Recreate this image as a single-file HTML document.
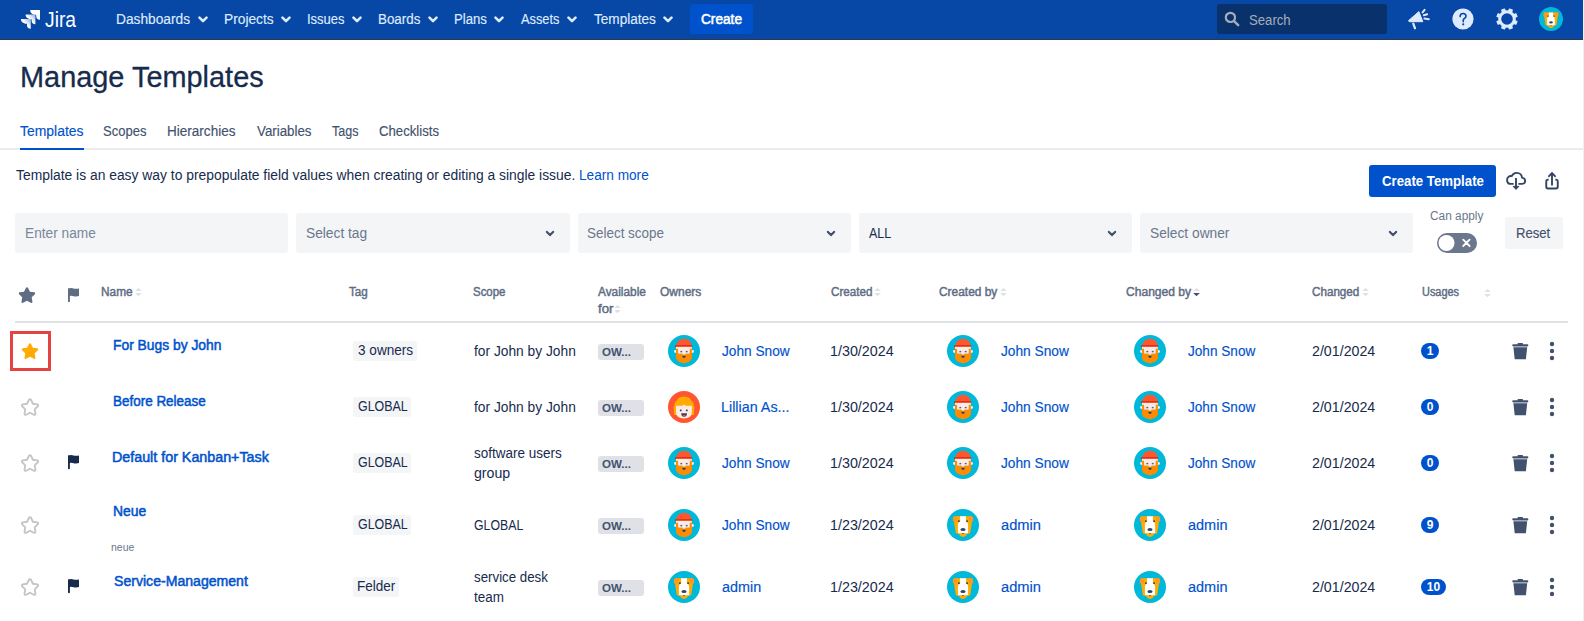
<!DOCTYPE html>
<html><head><meta charset="utf-8"><style>
html,body{margin:0;padding:0;background:#fff;width:1584px;height:621px;overflow:hidden;font-family:'Liberation Sans', sans-serif}
</style></head><body>
<div style="position:relative;width:1584px;height:621px;overflow:hidden">
<div style="position:absolute;left:0;top:0;width:1583px;height:39px;background:#0747A6"></div><div style="position:absolute;left:0;top:39px;width:1583px;height:1px;background:#2f3846"></div><div style="position:absolute;left:1583px;top:0;width:1px;height:621px;background:#f0f0f0"></div><svg style="position:absolute;left:20px;top:9px" width="21" height="21" viewBox="0 0 21 21">
<defs><linearGradient id="jg" x1="1" y1="0" x2="0" y2="1"><stop offset="0" stop-color="#fff" stop-opacity="0.55"/><stop offset="0.5" stop-color="#fff"/></linearGradient></defs>
<path d="M10.2 1 H20 V10.8 C17.5 10.8 16.2 9.3 16.2 7.2 V5.8 C13 5.8 10.2 4.3 10.2 1 Z" fill="#fff"/>
<path d="M5.6 5.6 H15.4 V15.3 C12.9 15.3 11.6 13.8 11.6 11.7 V10.3 C8.4 10.3 5.6 8.9 5.6 5.6 Z" fill="url(#jg)"/>
<path d="M1 10 H10.8 V19.8 C8.3 19.8 7 18.3 7 16.2 V14.7 C3.8 14.7 1 13.3 1 10 Z" fill="url(#jg)"/>
</svg><svg style="position:absolute;left:198.1px;top:15.6px" width="10" height="7" viewBox="0 0 10 7"><path d="M1.5 1.6 L5 5.1 L8.5 1.6" fill="none" stroke="#DEEBFF" stroke-width="2.6" stroke-linecap="round" stroke-linejoin="round"/></svg><svg style="position:absolute;left:280.9px;top:15.6px" width="10" height="7" viewBox="0 0 10 7"><path d="M1.5 1.6 L5 5.1 L8.5 1.6" fill="none" stroke="#DEEBFF" stroke-width="2.6" stroke-linecap="round" stroke-linejoin="round"/></svg><svg style="position:absolute;left:351.79999999999995px;top:15.6px" width="10" height="7" viewBox="0 0 10 7"><path d="M1.5 1.6 L5 5.1 L8.5 1.6" fill="none" stroke="#DEEBFF" stroke-width="2.6" stroke-linecap="round" stroke-linejoin="round"/></svg><svg style="position:absolute;left:428.2px;top:15.6px" width="10" height="7" viewBox="0 0 10 7"><path d="M1.5 1.6 L5 5.1 L8.5 1.6" fill="none" stroke="#DEEBFF" stroke-width="2.6" stroke-linecap="round" stroke-linejoin="round"/></svg><svg style="position:absolute;left:494.4px;top:15.6px" width="10" height="7" viewBox="0 0 10 7"><path d="M1.5 1.6 L5 5.1 L8.5 1.6" fill="none" stroke="#DEEBFF" stroke-width="2.6" stroke-linecap="round" stroke-linejoin="round"/></svg><svg style="position:absolute;left:566.8px;top:15.6px" width="10" height="7" viewBox="0 0 10 7"><path d="M1.5 1.6 L5 5.1 L8.5 1.6" fill="none" stroke="#DEEBFF" stroke-width="2.6" stroke-linecap="round" stroke-linejoin="round"/></svg><svg style="position:absolute;left:663.1px;top:15.6px" width="10" height="7" viewBox="0 0 10 7"><path d="M1.5 1.6 L5 5.1 L8.5 1.6" fill="none" stroke="#DEEBFF" stroke-width="2.6" stroke-linecap="round" stroke-linejoin="round"/></svg><div style="position:absolute;left:690px;top:4px;width:63px;height:30px;background:#0052CC;border-radius:3px"></div><div style="position:absolute;left:1217px;top:4px;width:170px;height:30px;background:#09326C;border-radius:3px"></div><svg style="position:absolute;left:1224px;top:11px" width="16" height="16" viewBox="0 0 16 16"><circle cx="6.4" cy="6.4" r="4.6" fill="none" stroke="#A5ADBA" stroke-width="2.2"/><path d="M9.8 9.8 L14.2 14.2" stroke="#A5ADBA" stroke-width="2.4" stroke-linecap="round"/></svg><svg style="position:absolute;left:1404px;top:6px" width="30" height="26" viewBox="0 0 30 26">
<path d="M4.6 14.6 L14.9 5.6 L18.8 15.7 L5.2 15.7 Z" fill="#DEEBFF" stroke="#DEEBFF" stroke-width="1" stroke-linejoin="round"/>
<path d="M9.3 17.6 L11 22.3" stroke="#DEEBFF" stroke-width="2.2" stroke-linecap="round"/>
<path d="M18.6 6.4 L20.6 3.8 M19.8 9.2 L23.2 8.2 M20.4 12.6 L24.8 13.2" stroke="#DEEBFF" stroke-width="2" stroke-linecap="round"/>
</svg><svg style="position:absolute;left:1452px;top:8px" width="22" height="22" viewBox="0 0 22 22">
<circle cx="11" cy="11" r="10.6" fill="#DEEBFF"/>
<path d="M8.1 8.6 C8.1 6.6 9.4 5.5 11.1 5.5 C12.8 5.5 14 6.6 14 8.2 C14 9.9 12.2 10.4 11.4 11.6 L11.2 13.6" fill="none" stroke="#0747A6" stroke-width="1.6" stroke-linecap="round"/>
<circle cx="11.2" cy="16.3" r="1.1" fill="#0747A6"/>
</svg><svg style="position:absolute;left:1496px;top:8px" width="22" height="22" viewBox="-11 -11 22 22">
<rect x="-2.1" y="-10.8" width="4.2" height="4.5" rx="0.6" transform="rotate(22.5)" fill="#DEEBFF"/><rect x="-2.1" y="-10.8" width="4.2" height="4.5" rx="0.6" transform="rotate(67.5)" fill="#DEEBFF"/><rect x="-2.1" y="-10.8" width="4.2" height="4.5" rx="0.6" transform="rotate(112.5)" fill="#DEEBFF"/><rect x="-2.1" y="-10.8" width="4.2" height="4.5" rx="0.6" transform="rotate(157.5)" fill="#DEEBFF"/><rect x="-2.1" y="-10.8" width="4.2" height="4.5" rx="0.6" transform="rotate(202.5)" fill="#DEEBFF"/><rect x="-2.1" y="-10.8" width="4.2" height="4.5" rx="0.6" transform="rotate(247.5)" fill="#DEEBFF"/><rect x="-2.1" y="-10.8" width="4.2" height="4.5" rx="0.6" transform="rotate(292.5)" fill="#DEEBFF"/><rect x="-2.1" y="-10.8" width="4.2" height="4.5" rx="0.6" transform="rotate(337.5)" fill="#DEEBFF"/><circle r="7.3" fill="none" stroke="#DEEBFF" stroke-width="3"/></svg><svg style="position:absolute;left:1539.0px;top:7.0px" width="24" height="24" viewBox="0 0 32 32">
<circle cx="16" cy="16" r="16" fill="#00B8D9"/>
<path d="M7.4 7.6 Q7.4 7.2 8 7.2 H24 Q24.6 7.2 24.6 7.6 L24.8 14 L23.2 24.2 Q21.2 24.8 19.8 24.8 L19.4 26.6 Q17.8 28 16 28 Q14.2 28 12.6 26.6 L12.2 24.8 Q10.8 24.8 8.8 24.2 L7.2 14 Z" fill="#FFAB00"/>
<path d="M6 8.6 Q6.2 7 8.2 7 L10.4 7.2 L10.2 12.6 L7.2 12.8 Q5.8 12.6 5.8 11.2 Z" fill="#FF991F"/>
<path d="M26 8.6 Q25.8 7 23.8 7 L21.6 7.2 L21.8 12.6 L24.8 12.8 Q26.2 12.6 26.2 11.2 Z" fill="#FF991F"/>
<path d="M13 7.2 H19 L18.8 12.2 Q20.9 13.2 21.1 15.4 L21.1 24.3 L10.9 24.3 L10.9 15.4 Q11.1 13.2 13.2 12.2 Z" fill="#ffffff"/>
<rect x="11" y="11.3" width="1.7" height="1.8" rx="0.4" fill="#344563"/><rect x="19.3" y="11.3" width="1.7" height="1.8" rx="0.4" fill="#344563"/>
<ellipse cx="16" cy="20.5" rx="2.6" ry="1.5" fill="#344563"/>
<path d="M14.8 24.3 H17.2 L16 25.3 Z" fill="#344563"/>
</svg><div style="position:absolute;left:0;top:148px;width:1583px;height:2px;background:#EBECF0"></div><div style="position:absolute;left:20px;top:148px;width:64px;height:2px;background:#0052CC"></div><div style="position:absolute;left:1369px;top:165px;width:127px;height:32px;background:#0052CC;border-radius:3px"></div><svg style="position:absolute;left:1502px;top:168px" width="28" height="26" viewBox="0 0 28 26">
<path d="M11.6 15.9 H8.9 C6.6 15.9 5.1 14.1 5.1 11.9 C5.1 9.7 6.8 8.0 9 8.0 C9.2 8 9.5 8 9.7 8.1 C10.5 6.1 12.4 4.9 14.8 4.9 C17.6 4.9 19.8 6.9 20 9.6 C21.9 9.9 23.2 11.3 23.2 13 C23.2 14.6 22 15.9 20.3 15.9 H16.4" fill="none" stroke="#344563" stroke-width="1.9" stroke-linejoin="round"/>
<path d="M14 10 V20.6" stroke="#344563" stroke-width="1.9"/>
<path d="M11.2 18.4 L14 21.4 L16.8 18.4 Z" fill="#344563" stroke="#344563" stroke-width="1" stroke-linejoin="round"/>
</svg><svg style="position:absolute;left:1538px;top:168px" width="28" height="26" viewBox="0 0 28 26">
<path d="M10.7 11.6 H10 C9 11.6 8.25 12.4 8.25 13.4 V18.8 C8.25 19.8 9 20.55 10 20.55 H18 C19 20.55 19.75 19.8 19.75 18.8 V13.4 C19.75 12.4 19 11.6 18 11.6 H17.3" fill="none" stroke="#344563" stroke-width="1.9"/>
<path d="M14 5.6 V17.4" stroke="#344563" stroke-width="1.9"/>
<path d="M11 8.2 L14 5.1 L17 8.2" fill="none" stroke="#344563" stroke-width="1.9" stroke-linecap="round"/>
</svg><div style="position:absolute;left:15px;top:213px;width:273px;height:40px;background:#F4F5F7;border-radius:3px"></div><div style="position:absolute;left:296px;top:213px;width:274px;height:40px;background:#F4F5F7;border-radius:3px"></div><div style="position:absolute;left:578px;top:213px;width:273px;height:40px;background:#F4F5F7;border-radius:3px"></div><div style="position:absolute;left:859px;top:213px;width:273px;height:40px;background:#F4F5F7;border-radius:3px"></div><div style="position:absolute;left:1140px;top:213px;width:273px;height:40px;background:#F4F5F7;border-radius:3px"></div><svg style="position:absolute;left:545.3px;top:229.6px" width="10" height="8" viewBox="0 0 10 8"><path d="M1.9 1.9 L5 5.1 L8.1 1.9" fill="none" stroke="#42526E" stroke-width="2.2" stroke-linecap="round" stroke-linejoin="round"/></svg><svg style="position:absolute;left:826.3px;top:229.6px" width="10" height="8" viewBox="0 0 10 8"><path d="M1.9 1.9 L5 5.1 L8.1 1.9" fill="none" stroke="#42526E" stroke-width="2.2" stroke-linecap="round" stroke-linejoin="round"/></svg><svg style="position:absolute;left:1107.3px;top:229.6px" width="10" height="8" viewBox="0 0 10 8"><path d="M1.9 1.9 L5 5.1 L8.1 1.9" fill="none" stroke="#42526E" stroke-width="2.2" stroke-linecap="round" stroke-linejoin="round"/></svg><svg style="position:absolute;left:1388.3px;top:229.6px" width="10" height="8" viewBox="0 0 10 8"><path d="M1.9 1.9 L5 5.1 L8.1 1.9" fill="none" stroke="#42526E" stroke-width="2.2" stroke-linecap="round" stroke-linejoin="round"/></svg><svg style="position:absolute;left:1437px;top:233px" width="40" height="20" viewBox="0 0 40 20">
<rect x="0" y="0" width="40" height="20" rx="10" fill="#6B778C"/>
<circle cx="9.5" cy="10" r="8" fill="#fff"/>
<path d="M26.2 6.6 L32.6 13 M32.6 6.6 L26.2 13" stroke="#fff" stroke-width="1.8" stroke-linecap="round"/>
</svg><div style="position:absolute;left:1505px;top:217px;width:58px;height:32px;background:#F4F5F7;border-radius:3px"></div><svg style="position:absolute;left:19px;top:287px;overflow:visible" width="16" height="16" viewBox="0 0 16 16"><g transform="scale(1.0666666666666667) translate(-4.6 -4.4)"><path d="M12.072 17.284l-3.67 1.927a1.01 1.01 0 0 1-1.465-1.068l.7-4.09-2.969-2.894a1.01 1.01 0 0 1 .56-1.725l4.104-.596 1.835-3.718a1.01 1.01 0 0 1 1.81 0l1.836 3.718 4.104.596a1.01 1.01 0 0 1 .56 1.725l-2.97 2.895.701 4.089a1.01 1.01 0 0 1-1.465 1.068l-3.67-1.927z" fill="#5E6C84"/></g></svg><svg style="position:absolute;left:68px;top:287.5px" width="12" height="15" viewBox="0 0 12 15"><rect x="0" y="0.2" width="1.9" height="14" rx="0.9" fill="#5E6C84"/><path d="M0.6 0.6 Q3 -0.3 5.6 0.5 Q8.4 1.2 11 0.4 L11 8.1 Q8.4 9 5.6 8.2 Q3 7.4 0.6 8.2 Z" fill="#5E6C84"/></svg><svg style="position:absolute;left:135px;top:288px" width="7" height="9" viewBox="0 0 7 9"><path d="M0.2 3 L3.5 0 L6.8 3 Z" fill="#DFE1E6"/><path d="M0.2 5 L3.5 8.2 L6.8 5 Z" fill="#DFE1E6"/></svg><svg style="position:absolute;left:614px;top:305px" width="7" height="9" viewBox="0 0 7 9"><path d="M0.2 3 L3.5 0 L6.8 3 Z" fill="#DFE1E6"/><path d="M0.2 5 L3.5 8.2 L6.8 5 Z" fill="#DFE1E6"/></svg><svg style="position:absolute;left:874px;top:288px" width="7" height="9" viewBox="0 0 7 9"><path d="M0.2 3 L3.5 0 L6.8 3 Z" fill="#DFE1E6"/><path d="M0.2 5 L3.5 8.2 L6.8 5 Z" fill="#DFE1E6"/></svg><svg style="position:absolute;left:999.5px;top:288px" width="7" height="9" viewBox="0 0 7 9"><path d="M0.2 3 L3.5 0 L6.8 3 Z" fill="#DFE1E6"/><path d="M0.2 5 L3.5 8.2 L6.8 5 Z" fill="#DFE1E6"/></svg><svg style="position:absolute;left:1192.5px;top:288px" width="7" height="9" viewBox="0 0 7 9"><path d="M0.2 3 L3.5 0 L6.8 3 Z" fill="#DFE1E6"/><path d="M0.2 5 L3.5 8.2 L6.8 5 Z" fill="#42526E"/></svg><svg style="position:absolute;left:1361.5px;top:288px" width="7" height="9" viewBox="0 0 7 9"><path d="M0.2 3 L3.5 0 L6.8 3 Z" fill="#DFE1E6"/><path d="M0.2 5 L3.5 8.2 L6.8 5 Z" fill="#DFE1E6"/></svg><svg style="position:absolute;left:1483.5px;top:289px" width="7" height="9" viewBox="0 0 7 9"><path d="M0.2 3 L3.5 0 L6.8 3 Z" fill="#DFE1E6"/><path d="M0.2 5 L3.5 8.2 L6.8 5 Z" fill="#DFE1E6"/></svg><div style="position:absolute;left:15px;top:321px;width:1553px;height:2px;background:#DFE1E6"></div><div style="position:absolute;left:10px;top:331px;width:35px;height:34px;border:3px solid #E5433F"></div><svg style="position:absolute;left:22px;top:343px;overflow:visible" width="16" height="16" viewBox="0 0 16 16"><g transform="scale(1.0666666666666667) translate(-4.6 -4.4)"><path d="M12.072 17.284l-3.67 1.927a1.01 1.01 0 0 1-1.465-1.068l.7-4.09-2.969-2.894a1.01 1.01 0 0 1 .56-1.725l4.104-.596 1.835-3.718a1.01 1.01 0 0 1 1.81 0l1.836 3.718 4.104.596a1.01 1.01 0 0 1 .56 1.725l-2.97 2.895.701 4.089a1.01 1.01 0 0 1-1.465 1.068l-3.67-1.927z" fill="#FFAB00"/></g></svg><div style="position:absolute;left:353px;top:341px;width:64px;height:20px;background:#F4F5F7;border-radius:3px"></div><div style="position:absolute;left:598px;top:344px;width:46px;height:16px;background:#DFE1E6;border-radius:3px"></div><svg style="position:absolute;left:668.0px;top:335.0px" width="32" height="32" viewBox="0 0 32 32">
<circle cx="16" cy="16" r="16" fill="#00B8D9"/>
<path d="M8.8 10.6 Q8.8 3.8 16 3.8 Q23.2 3.8 23.2 10.6 Z" fill="#FF5630"/>
<rect x="7" y="10.1" width="17.2" height="2.2" rx="0.4" fill="#DE350B"/>
<circle cx="7.4" cy="16.5" r="1.4" fill="#FFEBE6"/><circle cx="24.6" cy="16.5" r="1.4" fill="#FFEBE6"/>
<rect x="8" y="11.8" width="15.8" height="7" fill="#FFEBE6"/>
<path d="M8 13.8 L10 13.8 L10.2 18.8 L21.6 18.8 L21.8 13.8 L23.8 13.8 L24 21.5 Q24.6 23 23.4 24 Q23.6 25.8 21.6 26 Q20.8 27.8 18.6 27.4 Q17.4 28.6 16 28 Q14.6 28.6 13.4 27.4 Q11.2 27.8 10.4 26 Q8.4 25.8 8.6 24 Q7.4 23 8 21.5 Z" fill="#FF8B00"/>
<rect x="14.6" y="18" width="2.8" height="1.6" fill="#FFEBE6"/>
<rect x="12.4" y="15.9" width="1.8" height="1.4" fill="#505F79"/><rect x="17.8" y="15.9" width="1.8" height="1.4" fill="#505F79"/>
<path d="M14.2 20.8 H17.8 Q17.6 23 16 23 Q14.4 23 14.2 20.8 Z" fill="#344563"/>
</svg><svg style="position:absolute;left:947.0px;top:335.0px" width="32" height="32" viewBox="0 0 32 32">
<circle cx="16" cy="16" r="16" fill="#00B8D9"/>
<path d="M8.8 10.6 Q8.8 3.8 16 3.8 Q23.2 3.8 23.2 10.6 Z" fill="#FF5630"/>
<rect x="7" y="10.1" width="17.2" height="2.2" rx="0.4" fill="#DE350B"/>
<circle cx="7.4" cy="16.5" r="1.4" fill="#FFEBE6"/><circle cx="24.6" cy="16.5" r="1.4" fill="#FFEBE6"/>
<rect x="8" y="11.8" width="15.8" height="7" fill="#FFEBE6"/>
<path d="M8 13.8 L10 13.8 L10.2 18.8 L21.6 18.8 L21.8 13.8 L23.8 13.8 L24 21.5 Q24.6 23 23.4 24 Q23.6 25.8 21.6 26 Q20.8 27.8 18.6 27.4 Q17.4 28.6 16 28 Q14.6 28.6 13.4 27.4 Q11.2 27.8 10.4 26 Q8.4 25.8 8.6 24 Q7.4 23 8 21.5 Z" fill="#FF8B00"/>
<rect x="14.6" y="18" width="2.8" height="1.6" fill="#FFEBE6"/>
<rect x="12.4" y="15.9" width="1.8" height="1.4" fill="#505F79"/><rect x="17.8" y="15.9" width="1.8" height="1.4" fill="#505F79"/>
<path d="M14.2 20.8 H17.8 Q17.6 23 16 23 Q14.4 23 14.2 20.8 Z" fill="#344563"/>
</svg><svg style="position:absolute;left:1134.0px;top:335.0px" width="32" height="32" viewBox="0 0 32 32">
<circle cx="16" cy="16" r="16" fill="#00B8D9"/>
<path d="M8.8 10.6 Q8.8 3.8 16 3.8 Q23.2 3.8 23.2 10.6 Z" fill="#FF5630"/>
<rect x="7" y="10.1" width="17.2" height="2.2" rx="0.4" fill="#DE350B"/>
<circle cx="7.4" cy="16.5" r="1.4" fill="#FFEBE6"/><circle cx="24.6" cy="16.5" r="1.4" fill="#FFEBE6"/>
<rect x="8" y="11.8" width="15.8" height="7" fill="#FFEBE6"/>
<path d="M8 13.8 L10 13.8 L10.2 18.8 L21.6 18.8 L21.8 13.8 L23.8 13.8 L24 21.5 Q24.6 23 23.4 24 Q23.6 25.8 21.6 26 Q20.8 27.8 18.6 27.4 Q17.4 28.6 16 28 Q14.6 28.6 13.4 27.4 Q11.2 27.8 10.4 26 Q8.4 25.8 8.6 24 Q7.4 23 8 21.5 Z" fill="#FF8B00"/>
<rect x="14.6" y="18" width="2.8" height="1.6" fill="#FFEBE6"/>
<rect x="12.4" y="15.9" width="1.8" height="1.4" fill="#505F79"/><rect x="17.8" y="15.9" width="1.8" height="1.4" fill="#505F79"/>
<path d="M14.2 20.8 H17.8 Q17.6 23 16 23 Q14.4 23 14.2 20.8 Z" fill="#344563"/>
</svg><div style="position:absolute;left:1421px;top:343px;width:18px;height:16px;background:#0052CC;border-radius:8px;color:#fff;font-family:'Liberation Sans', sans-serif;font-weight:700;font-size:12px;line-height:16px;text-align:center">1</div><svg style="position:absolute;left:1512px;top:343px" width="17" height="17" viewBox="0 0 17 17"><rect x="0.3" y="1.2" width="16" height="2.2" rx="0.8" fill="#42526E"/><rect x="5.5" y="0" width="5.5" height="2" rx="0.8" fill="#42526E"/><path d="M1.4 4.3 H15.2 L13.9 16.2 H2.7 Z" fill="#42526E"/></svg><svg style="position:absolute;left:1548px;top:341px" width="8" height="20" viewBox="0 0 8 20"><circle cx="4" cy="3" r="2.2" fill="#42526E"/><circle cx="4" cy="10" r="2.2" fill="#42526E"/><circle cx="4" cy="17" r="2.2" fill="#42526E"/></svg><svg style="position:absolute;left:22px;top:399px;overflow:visible" width="16" height="16" viewBox="0 0 16 16"><g transform="scale(1.0666666666666667) translate(-4.6 -4.4)"><path d="M12.072 17.284l-3.67 1.927a1.01 1.01 0 0 1-1.465-1.068l.7-4.09-2.969-2.894a1.01 1.01 0 0 1 .56-1.725l4.104-.596 1.835-3.718a1.01 1.01 0 0 1 1.81 0l1.836 3.718 4.104.596a1.01 1.01 0 0 1 .56 1.725l-2.97 2.895.701 4.089a1.01 1.01 0 0 1-1.465 1.068l-3.67-1.927z" fill="none" stroke="#C4C4C4" stroke-width="1.7" stroke-linejoin="round"/></g></svg><div style="position:absolute;left:353px;top:397px;width:58px;height:20px;background:#F4F5F7;border-radius:3px"></div><div style="position:absolute;left:598px;top:400px;width:46px;height:16px;background:#DFE1E6;border-radius:3px"></div><svg style="position:absolute;left:668.0px;top:391.0px" width="32" height="32" viewBox="0 0 32 32">
<circle cx="16" cy="16" r="16" fill="#FF5630"/>
<path d="M6.2 24 Q5.4 21 6 18.4 Q4.6 16.6 6.4 14.6 Q6.2 11.2 8.8 9.8 Q10 6.2 13.6 6 Q16 4.8 18.6 6 Q22 6.2 23.2 9.8 Q26 11.2 25.6 14.6 Q27.4 16.6 26 18.4 Q26.6 21 25.8 24 Z" fill="#FFAB00"/>
<path d="M8 14.8 L14.4 14.8 L16 13.4 L17.6 14.8 L23.9 14.8 L23.9 21 Q23.9 27.4 16 27.4 Q8 27.4 8 21 Z" fill="#FFEBE6"/>
<rect x="11.9" y="18.4" width="1.8" height="1.8" rx="0.5" fill="#344563"/><rect x="17.9" y="18.4" width="1.8" height="1.8" rx="0.5" fill="#344563"/>
<path d="M13.2 22.2 H19 Q19 25.8 16.1 25.8 Q13.2 25.8 13.2 22.2 Z" fill="#344563"/>
<path d="M14.6 24.6 Q16.1 23.6 17.6 24.6 Q17 25.8 16.1 25.8 Q15.2 25.8 14.6 24.6 Z" fill="#FF5630"/>
</svg><svg style="position:absolute;left:947.0px;top:391.0px" width="32" height="32" viewBox="0 0 32 32">
<circle cx="16" cy="16" r="16" fill="#00B8D9"/>
<path d="M8.8 10.6 Q8.8 3.8 16 3.8 Q23.2 3.8 23.2 10.6 Z" fill="#FF5630"/>
<rect x="7" y="10.1" width="17.2" height="2.2" rx="0.4" fill="#DE350B"/>
<circle cx="7.4" cy="16.5" r="1.4" fill="#FFEBE6"/><circle cx="24.6" cy="16.5" r="1.4" fill="#FFEBE6"/>
<rect x="8" y="11.8" width="15.8" height="7" fill="#FFEBE6"/>
<path d="M8 13.8 L10 13.8 L10.2 18.8 L21.6 18.8 L21.8 13.8 L23.8 13.8 L24 21.5 Q24.6 23 23.4 24 Q23.6 25.8 21.6 26 Q20.8 27.8 18.6 27.4 Q17.4 28.6 16 28 Q14.6 28.6 13.4 27.4 Q11.2 27.8 10.4 26 Q8.4 25.8 8.6 24 Q7.4 23 8 21.5 Z" fill="#FF8B00"/>
<rect x="14.6" y="18" width="2.8" height="1.6" fill="#FFEBE6"/>
<rect x="12.4" y="15.9" width="1.8" height="1.4" fill="#505F79"/><rect x="17.8" y="15.9" width="1.8" height="1.4" fill="#505F79"/>
<path d="M14.2 20.8 H17.8 Q17.6 23 16 23 Q14.4 23 14.2 20.8 Z" fill="#344563"/>
</svg><svg style="position:absolute;left:1134.0px;top:391.0px" width="32" height="32" viewBox="0 0 32 32">
<circle cx="16" cy="16" r="16" fill="#00B8D9"/>
<path d="M8.8 10.6 Q8.8 3.8 16 3.8 Q23.2 3.8 23.2 10.6 Z" fill="#FF5630"/>
<rect x="7" y="10.1" width="17.2" height="2.2" rx="0.4" fill="#DE350B"/>
<circle cx="7.4" cy="16.5" r="1.4" fill="#FFEBE6"/><circle cx="24.6" cy="16.5" r="1.4" fill="#FFEBE6"/>
<rect x="8" y="11.8" width="15.8" height="7" fill="#FFEBE6"/>
<path d="M8 13.8 L10 13.8 L10.2 18.8 L21.6 18.8 L21.8 13.8 L23.8 13.8 L24 21.5 Q24.6 23 23.4 24 Q23.6 25.8 21.6 26 Q20.8 27.8 18.6 27.4 Q17.4 28.6 16 28 Q14.6 28.6 13.4 27.4 Q11.2 27.8 10.4 26 Q8.4 25.8 8.6 24 Q7.4 23 8 21.5 Z" fill="#FF8B00"/>
<rect x="14.6" y="18" width="2.8" height="1.6" fill="#FFEBE6"/>
<rect x="12.4" y="15.9" width="1.8" height="1.4" fill="#505F79"/><rect x="17.8" y="15.9" width="1.8" height="1.4" fill="#505F79"/>
<path d="M14.2 20.8 H17.8 Q17.6 23 16 23 Q14.4 23 14.2 20.8 Z" fill="#344563"/>
</svg><div style="position:absolute;left:1421px;top:399px;width:18px;height:16px;background:#0052CC;border-radius:8px;color:#fff;font-family:'Liberation Sans', sans-serif;font-weight:700;font-size:12px;line-height:16px;text-align:center">0</div><svg style="position:absolute;left:1512px;top:399px" width="17" height="17" viewBox="0 0 17 17"><rect x="0.3" y="1.2" width="16" height="2.2" rx="0.8" fill="#42526E"/><rect x="5.5" y="0" width="5.5" height="2" rx="0.8" fill="#42526E"/><path d="M1.4 4.3 H15.2 L13.9 16.2 H2.7 Z" fill="#42526E"/></svg><svg style="position:absolute;left:1548px;top:397px" width="8" height="20" viewBox="0 0 8 20"><circle cx="4" cy="3" r="2.2" fill="#42526E"/><circle cx="4" cy="10" r="2.2" fill="#42526E"/><circle cx="4" cy="17" r="2.2" fill="#42526E"/></svg><svg style="position:absolute;left:22px;top:455px;overflow:visible" width="16" height="16" viewBox="0 0 16 16"><g transform="scale(1.0666666666666667) translate(-4.6 -4.4)"><path d="M12.072 17.284l-3.67 1.927a1.01 1.01 0 0 1-1.465-1.068l.7-4.09-2.969-2.894a1.01 1.01 0 0 1 .56-1.725l4.104-.596 1.835-3.718a1.01 1.01 0 0 1 1.81 0l1.836 3.718 4.104.596a1.01 1.01 0 0 1 .56 1.725l-2.97 2.895.701 4.089a1.01 1.01 0 0 1-1.465 1.068l-3.67-1.927z" fill="none" stroke="#C4C4C4" stroke-width="1.7" stroke-linejoin="round"/></g></svg><svg style="position:absolute;left:68px;top:454.7px" width="12" height="15" viewBox="0 0 12 15"><rect x="0" y="0.2" width="1.9" height="14" rx="0.9" fill="#172B4D"/><path d="M0.6 0.6 Q3 -0.3 5.6 0.5 Q8.4 1.2 11 0.4 L11 8.1 Q8.4 9 5.6 8.2 Q3 7.4 0.6 8.2 Z" fill="#172B4D"/></svg><div style="position:absolute;left:353px;top:453px;width:58px;height:20px;background:#F4F5F7;border-radius:3px"></div><div style="position:absolute;left:598px;top:456px;width:46px;height:16px;background:#DFE1E6;border-radius:3px"></div><svg style="position:absolute;left:668.0px;top:447.0px" width="32" height="32" viewBox="0 0 32 32">
<circle cx="16" cy="16" r="16" fill="#00B8D9"/>
<path d="M8.8 10.6 Q8.8 3.8 16 3.8 Q23.2 3.8 23.2 10.6 Z" fill="#FF5630"/>
<rect x="7" y="10.1" width="17.2" height="2.2" rx="0.4" fill="#DE350B"/>
<circle cx="7.4" cy="16.5" r="1.4" fill="#FFEBE6"/><circle cx="24.6" cy="16.5" r="1.4" fill="#FFEBE6"/>
<rect x="8" y="11.8" width="15.8" height="7" fill="#FFEBE6"/>
<path d="M8 13.8 L10 13.8 L10.2 18.8 L21.6 18.8 L21.8 13.8 L23.8 13.8 L24 21.5 Q24.6 23 23.4 24 Q23.6 25.8 21.6 26 Q20.8 27.8 18.6 27.4 Q17.4 28.6 16 28 Q14.6 28.6 13.4 27.4 Q11.2 27.8 10.4 26 Q8.4 25.8 8.6 24 Q7.4 23 8 21.5 Z" fill="#FF8B00"/>
<rect x="14.6" y="18" width="2.8" height="1.6" fill="#FFEBE6"/>
<rect x="12.4" y="15.9" width="1.8" height="1.4" fill="#505F79"/><rect x="17.8" y="15.9" width="1.8" height="1.4" fill="#505F79"/>
<path d="M14.2 20.8 H17.8 Q17.6 23 16 23 Q14.4 23 14.2 20.8 Z" fill="#344563"/>
</svg><svg style="position:absolute;left:947.0px;top:447.0px" width="32" height="32" viewBox="0 0 32 32">
<circle cx="16" cy="16" r="16" fill="#00B8D9"/>
<path d="M8.8 10.6 Q8.8 3.8 16 3.8 Q23.2 3.8 23.2 10.6 Z" fill="#FF5630"/>
<rect x="7" y="10.1" width="17.2" height="2.2" rx="0.4" fill="#DE350B"/>
<circle cx="7.4" cy="16.5" r="1.4" fill="#FFEBE6"/><circle cx="24.6" cy="16.5" r="1.4" fill="#FFEBE6"/>
<rect x="8" y="11.8" width="15.8" height="7" fill="#FFEBE6"/>
<path d="M8 13.8 L10 13.8 L10.2 18.8 L21.6 18.8 L21.8 13.8 L23.8 13.8 L24 21.5 Q24.6 23 23.4 24 Q23.6 25.8 21.6 26 Q20.8 27.8 18.6 27.4 Q17.4 28.6 16 28 Q14.6 28.6 13.4 27.4 Q11.2 27.8 10.4 26 Q8.4 25.8 8.6 24 Q7.4 23 8 21.5 Z" fill="#FF8B00"/>
<rect x="14.6" y="18" width="2.8" height="1.6" fill="#FFEBE6"/>
<rect x="12.4" y="15.9" width="1.8" height="1.4" fill="#505F79"/><rect x="17.8" y="15.9" width="1.8" height="1.4" fill="#505F79"/>
<path d="M14.2 20.8 H17.8 Q17.6 23 16 23 Q14.4 23 14.2 20.8 Z" fill="#344563"/>
</svg><svg style="position:absolute;left:1134.0px;top:447.0px" width="32" height="32" viewBox="0 0 32 32">
<circle cx="16" cy="16" r="16" fill="#00B8D9"/>
<path d="M8.8 10.6 Q8.8 3.8 16 3.8 Q23.2 3.8 23.2 10.6 Z" fill="#FF5630"/>
<rect x="7" y="10.1" width="17.2" height="2.2" rx="0.4" fill="#DE350B"/>
<circle cx="7.4" cy="16.5" r="1.4" fill="#FFEBE6"/><circle cx="24.6" cy="16.5" r="1.4" fill="#FFEBE6"/>
<rect x="8" y="11.8" width="15.8" height="7" fill="#FFEBE6"/>
<path d="M8 13.8 L10 13.8 L10.2 18.8 L21.6 18.8 L21.8 13.8 L23.8 13.8 L24 21.5 Q24.6 23 23.4 24 Q23.6 25.8 21.6 26 Q20.8 27.8 18.6 27.4 Q17.4 28.6 16 28 Q14.6 28.6 13.4 27.4 Q11.2 27.8 10.4 26 Q8.4 25.8 8.6 24 Q7.4 23 8 21.5 Z" fill="#FF8B00"/>
<rect x="14.6" y="18" width="2.8" height="1.6" fill="#FFEBE6"/>
<rect x="12.4" y="15.9" width="1.8" height="1.4" fill="#505F79"/><rect x="17.8" y="15.9" width="1.8" height="1.4" fill="#505F79"/>
<path d="M14.2 20.8 H17.8 Q17.6 23 16 23 Q14.4 23 14.2 20.8 Z" fill="#344563"/>
</svg><div style="position:absolute;left:1421px;top:455px;width:18px;height:16px;background:#0052CC;border-radius:8px;color:#fff;font-family:'Liberation Sans', sans-serif;font-weight:700;font-size:12px;line-height:16px;text-align:center">0</div><svg style="position:absolute;left:1512px;top:455px" width="17" height="17" viewBox="0 0 17 17"><rect x="0.3" y="1.2" width="16" height="2.2" rx="0.8" fill="#42526E"/><rect x="5.5" y="0" width="5.5" height="2" rx="0.8" fill="#42526E"/><path d="M1.4 4.3 H15.2 L13.9 16.2 H2.7 Z" fill="#42526E"/></svg><svg style="position:absolute;left:1548px;top:453px" width="8" height="20" viewBox="0 0 8 20"><circle cx="4" cy="3" r="2.2" fill="#42526E"/><circle cx="4" cy="10" r="2.2" fill="#42526E"/><circle cx="4" cy="17" r="2.2" fill="#42526E"/></svg><svg style="position:absolute;left:22px;top:517px;overflow:visible" width="16" height="16" viewBox="0 0 16 16"><g transform="scale(1.0666666666666667) translate(-4.6 -4.4)"><path d="M12.072 17.284l-3.67 1.927a1.01 1.01 0 0 1-1.465-1.068l.7-4.09-2.969-2.894a1.01 1.01 0 0 1 .56-1.725l4.104-.596 1.835-3.718a1.01 1.01 0 0 1 1.81 0l1.836 3.718 4.104.596a1.01 1.01 0 0 1 .56 1.725l-2.97 2.895.701 4.089a1.01 1.01 0 0 1-1.465 1.068l-3.67-1.927z" fill="none" stroke="#C4C4C4" stroke-width="1.7" stroke-linejoin="round"/></g></svg><div style="position:absolute;left:353px;top:515px;width:58px;height:20px;background:#F4F5F7;border-radius:3px"></div><div style="position:absolute;left:598px;top:518px;width:46px;height:16px;background:#DFE1E6;border-radius:3px"></div><svg style="position:absolute;left:668.0px;top:509.0px" width="32" height="32" viewBox="0 0 32 32">
<circle cx="16" cy="16" r="16" fill="#00B8D9"/>
<path d="M8.8 10.6 Q8.8 3.8 16 3.8 Q23.2 3.8 23.2 10.6 Z" fill="#FF5630"/>
<rect x="7" y="10.1" width="17.2" height="2.2" rx="0.4" fill="#DE350B"/>
<circle cx="7.4" cy="16.5" r="1.4" fill="#FFEBE6"/><circle cx="24.6" cy="16.5" r="1.4" fill="#FFEBE6"/>
<rect x="8" y="11.8" width="15.8" height="7" fill="#FFEBE6"/>
<path d="M8 13.8 L10 13.8 L10.2 18.8 L21.6 18.8 L21.8 13.8 L23.8 13.8 L24 21.5 Q24.6 23 23.4 24 Q23.6 25.8 21.6 26 Q20.8 27.8 18.6 27.4 Q17.4 28.6 16 28 Q14.6 28.6 13.4 27.4 Q11.2 27.8 10.4 26 Q8.4 25.8 8.6 24 Q7.4 23 8 21.5 Z" fill="#FF8B00"/>
<rect x="14.6" y="18" width="2.8" height="1.6" fill="#FFEBE6"/>
<rect x="12.4" y="15.9" width="1.8" height="1.4" fill="#505F79"/><rect x="17.8" y="15.9" width="1.8" height="1.4" fill="#505F79"/>
<path d="M14.2 20.8 H17.8 Q17.6 23 16 23 Q14.4 23 14.2 20.8 Z" fill="#344563"/>
</svg><svg style="position:absolute;left:947.0px;top:509.0px" width="32" height="32" viewBox="0 0 32 32">
<circle cx="16" cy="16" r="16" fill="#00B8D9"/>
<path d="M7.4 7.6 Q7.4 7.2 8 7.2 H24 Q24.6 7.2 24.6 7.6 L24.8 14 L23.2 24.2 Q21.2 24.8 19.8 24.8 L19.4 26.6 Q17.8 28 16 28 Q14.2 28 12.6 26.6 L12.2 24.8 Q10.8 24.8 8.8 24.2 L7.2 14 Z" fill="#FFAB00"/>
<path d="M6 8.6 Q6.2 7 8.2 7 L10.4 7.2 L10.2 12.6 L7.2 12.8 Q5.8 12.6 5.8 11.2 Z" fill="#FF991F"/>
<path d="M26 8.6 Q25.8 7 23.8 7 L21.6 7.2 L21.8 12.6 L24.8 12.8 Q26.2 12.6 26.2 11.2 Z" fill="#FF991F"/>
<path d="M13 7.2 H19 L18.8 12.2 Q20.9 13.2 21.1 15.4 L21.1 24.3 L10.9 24.3 L10.9 15.4 Q11.1 13.2 13.2 12.2 Z" fill="#ffffff"/>
<rect x="11" y="11.3" width="1.7" height="1.8" rx="0.4" fill="#344563"/><rect x="19.3" y="11.3" width="1.7" height="1.8" rx="0.4" fill="#344563"/>
<ellipse cx="16" cy="20.5" rx="2.6" ry="1.5" fill="#344563"/>
<path d="M14.8 24.3 H17.2 L16 25.3 Z" fill="#344563"/>
</svg><svg style="position:absolute;left:1134.0px;top:509.0px" width="32" height="32" viewBox="0 0 32 32">
<circle cx="16" cy="16" r="16" fill="#00B8D9"/>
<path d="M7.4 7.6 Q7.4 7.2 8 7.2 H24 Q24.6 7.2 24.6 7.6 L24.8 14 L23.2 24.2 Q21.2 24.8 19.8 24.8 L19.4 26.6 Q17.8 28 16 28 Q14.2 28 12.6 26.6 L12.2 24.8 Q10.8 24.8 8.8 24.2 L7.2 14 Z" fill="#FFAB00"/>
<path d="M6 8.6 Q6.2 7 8.2 7 L10.4 7.2 L10.2 12.6 L7.2 12.8 Q5.8 12.6 5.8 11.2 Z" fill="#FF991F"/>
<path d="M26 8.6 Q25.8 7 23.8 7 L21.6 7.2 L21.8 12.6 L24.8 12.8 Q26.2 12.6 26.2 11.2 Z" fill="#FF991F"/>
<path d="M13 7.2 H19 L18.8 12.2 Q20.9 13.2 21.1 15.4 L21.1 24.3 L10.9 24.3 L10.9 15.4 Q11.1 13.2 13.2 12.2 Z" fill="#ffffff"/>
<rect x="11" y="11.3" width="1.7" height="1.8" rx="0.4" fill="#344563"/><rect x="19.3" y="11.3" width="1.7" height="1.8" rx="0.4" fill="#344563"/>
<ellipse cx="16" cy="20.5" rx="2.6" ry="1.5" fill="#344563"/>
<path d="M14.8 24.3 H17.2 L16 25.3 Z" fill="#344563"/>
</svg><div style="position:absolute;left:1421px;top:517px;width:18px;height:16px;background:#0052CC;border-radius:8px;color:#fff;font-family:'Liberation Sans', sans-serif;font-weight:700;font-size:12px;line-height:16px;text-align:center">9</div><svg style="position:absolute;left:1512px;top:517px" width="17" height="17" viewBox="0 0 17 17"><rect x="0.3" y="1.2" width="16" height="2.2" rx="0.8" fill="#42526E"/><rect x="5.5" y="0" width="5.5" height="2" rx="0.8" fill="#42526E"/><path d="M1.4 4.3 H15.2 L13.9 16.2 H2.7 Z" fill="#42526E"/></svg><svg style="position:absolute;left:1548px;top:515px" width="8" height="20" viewBox="0 0 8 20"><circle cx="4" cy="3" r="2.2" fill="#42526E"/><circle cx="4" cy="10" r="2.2" fill="#42526E"/><circle cx="4" cy="17" r="2.2" fill="#42526E"/></svg><svg style="position:absolute;left:22px;top:579px;overflow:visible" width="16" height="16" viewBox="0 0 16 16"><g transform="scale(1.0666666666666667) translate(-4.6 -4.4)"><path d="M12.072 17.284l-3.67 1.927a1.01 1.01 0 0 1-1.465-1.068l.7-4.09-2.969-2.894a1.01 1.01 0 0 1 .56-1.725l4.104-.596 1.835-3.718a1.01 1.01 0 0 1 1.81 0l1.836 3.718 4.104.596a1.01 1.01 0 0 1 .56 1.725l-2.97 2.895.701 4.089a1.01 1.01 0 0 1-1.465 1.068l-3.67-1.927z" fill="none" stroke="#C4C4C4" stroke-width="1.7" stroke-linejoin="round"/></g></svg><svg style="position:absolute;left:68px;top:578.7px" width="12" height="15" viewBox="0 0 12 15"><rect x="0" y="0.2" width="1.9" height="14" rx="0.9" fill="#172B4D"/><path d="M0.6 0.6 Q3 -0.3 5.6 0.5 Q8.4 1.2 11 0.4 L11 8.1 Q8.4 9 5.6 8.2 Q3 7.4 0.6 8.2 Z" fill="#172B4D"/></svg><div style="position:absolute;left:353px;top:577px;width:45.5px;height:20px;background:#F4F5F7;border-radius:3px"></div><div style="position:absolute;left:598px;top:580px;width:46px;height:16px;background:#DFE1E6;border-radius:3px"></div><svg style="position:absolute;left:668.0px;top:571.0px" width="32" height="32" viewBox="0 0 32 32">
<circle cx="16" cy="16" r="16" fill="#00B8D9"/>
<path d="M7.4 7.6 Q7.4 7.2 8 7.2 H24 Q24.6 7.2 24.6 7.6 L24.8 14 L23.2 24.2 Q21.2 24.8 19.8 24.8 L19.4 26.6 Q17.8 28 16 28 Q14.2 28 12.6 26.6 L12.2 24.8 Q10.8 24.8 8.8 24.2 L7.2 14 Z" fill="#FFAB00"/>
<path d="M6 8.6 Q6.2 7 8.2 7 L10.4 7.2 L10.2 12.6 L7.2 12.8 Q5.8 12.6 5.8 11.2 Z" fill="#FF991F"/>
<path d="M26 8.6 Q25.8 7 23.8 7 L21.6 7.2 L21.8 12.6 L24.8 12.8 Q26.2 12.6 26.2 11.2 Z" fill="#FF991F"/>
<path d="M13 7.2 H19 L18.8 12.2 Q20.9 13.2 21.1 15.4 L21.1 24.3 L10.9 24.3 L10.9 15.4 Q11.1 13.2 13.2 12.2 Z" fill="#ffffff"/>
<rect x="11" y="11.3" width="1.7" height="1.8" rx="0.4" fill="#344563"/><rect x="19.3" y="11.3" width="1.7" height="1.8" rx="0.4" fill="#344563"/>
<ellipse cx="16" cy="20.5" rx="2.6" ry="1.5" fill="#344563"/>
<path d="M14.8 24.3 H17.2 L16 25.3 Z" fill="#344563"/>
</svg><svg style="position:absolute;left:947.0px;top:571.0px" width="32" height="32" viewBox="0 0 32 32">
<circle cx="16" cy="16" r="16" fill="#00B8D9"/>
<path d="M7.4 7.6 Q7.4 7.2 8 7.2 H24 Q24.6 7.2 24.6 7.6 L24.8 14 L23.2 24.2 Q21.2 24.8 19.8 24.8 L19.4 26.6 Q17.8 28 16 28 Q14.2 28 12.6 26.6 L12.2 24.8 Q10.8 24.8 8.8 24.2 L7.2 14 Z" fill="#FFAB00"/>
<path d="M6 8.6 Q6.2 7 8.2 7 L10.4 7.2 L10.2 12.6 L7.2 12.8 Q5.8 12.6 5.8 11.2 Z" fill="#FF991F"/>
<path d="M26 8.6 Q25.8 7 23.8 7 L21.6 7.2 L21.8 12.6 L24.8 12.8 Q26.2 12.6 26.2 11.2 Z" fill="#FF991F"/>
<path d="M13 7.2 H19 L18.8 12.2 Q20.9 13.2 21.1 15.4 L21.1 24.3 L10.9 24.3 L10.9 15.4 Q11.1 13.2 13.2 12.2 Z" fill="#ffffff"/>
<rect x="11" y="11.3" width="1.7" height="1.8" rx="0.4" fill="#344563"/><rect x="19.3" y="11.3" width="1.7" height="1.8" rx="0.4" fill="#344563"/>
<ellipse cx="16" cy="20.5" rx="2.6" ry="1.5" fill="#344563"/>
<path d="M14.8 24.3 H17.2 L16 25.3 Z" fill="#344563"/>
</svg><svg style="position:absolute;left:1134.0px;top:571.0px" width="32" height="32" viewBox="0 0 32 32">
<circle cx="16" cy="16" r="16" fill="#00B8D9"/>
<path d="M7.4 7.6 Q7.4 7.2 8 7.2 H24 Q24.6 7.2 24.6 7.6 L24.8 14 L23.2 24.2 Q21.2 24.8 19.8 24.8 L19.4 26.6 Q17.8 28 16 28 Q14.2 28 12.6 26.6 L12.2 24.8 Q10.8 24.8 8.8 24.2 L7.2 14 Z" fill="#FFAB00"/>
<path d="M6 8.6 Q6.2 7 8.2 7 L10.4 7.2 L10.2 12.6 L7.2 12.8 Q5.8 12.6 5.8 11.2 Z" fill="#FF991F"/>
<path d="M26 8.6 Q25.8 7 23.8 7 L21.6 7.2 L21.8 12.6 L24.8 12.8 Q26.2 12.6 26.2 11.2 Z" fill="#FF991F"/>
<path d="M13 7.2 H19 L18.8 12.2 Q20.9 13.2 21.1 15.4 L21.1 24.3 L10.9 24.3 L10.9 15.4 Q11.1 13.2 13.2 12.2 Z" fill="#ffffff"/>
<rect x="11" y="11.3" width="1.7" height="1.8" rx="0.4" fill="#344563"/><rect x="19.3" y="11.3" width="1.7" height="1.8" rx="0.4" fill="#344563"/>
<ellipse cx="16" cy="20.5" rx="2.6" ry="1.5" fill="#344563"/>
<path d="M14.8 24.3 H17.2 L16 25.3 Z" fill="#344563"/>
</svg><div style="position:absolute;left:1421px;top:579px;width:25px;height:16px;background:#0052CC;border-radius:8px;color:#fff;font-family:'Liberation Sans', sans-serif;font-weight:700;font-size:12px;line-height:16px;text-align:center">10</div><svg style="position:absolute;left:1512px;top:579px" width="17" height="17" viewBox="0 0 17 17"><rect x="0.3" y="1.2" width="16" height="2.2" rx="0.8" fill="#42526E"/><rect x="5.5" y="0" width="5.5" height="2" rx="0.8" fill="#42526E"/><path d="M1.4 4.3 H15.2 L13.9 16.2 H2.7 Z" fill="#42526E"/></svg><svg style="position:absolute;left:1548px;top:577px" width="8" height="20" viewBox="0 0 8 20"><circle cx="4" cy="3" r="2.2" fill="#42526E"/><circle cx="4" cy="10" r="2.2" fill="#42526E"/><circle cx="4" cy="17" r="2.2" fill="#42526E"/></svg>
<div style="position:absolute;left:44.80px;top:9.00px;font-size:22px;font-weight:400;color:#ffffff;line-height:1;white-space:nowrap;transform:scaleX(0.8750);transform-origin:0 0;">Jira</div><div style="position:absolute;left:116.42px;top:12.20px;font-size:14px;font-weight:400;color:#DEEBFF;line-height:1;white-space:nowrap;transform:scaleX(0.9811);transform-origin:0 0;-webkit-text-stroke:0.15px #DEEBFF;">Dashboards</div><div style="position:absolute;left:223.92px;top:12.20px;font-size:14px;font-weight:400;color:#DEEBFF;line-height:1;white-space:nowrap;transform:scaleX(0.9816);transform-origin:0 0;-webkit-text-stroke:0.15px #DEEBFF;">Projects</div><div style="position:absolute;left:306.87px;top:12.20px;font-size:14px;font-weight:400;color:#DEEBFF;line-height:1;white-space:nowrap;transform:scaleX(0.9282);transform-origin:0 0;-webkit-text-stroke:0.15px #DEEBFF;">Issues</div><div style="position:absolute;left:377.94px;top:12.20px;font-size:14px;font-weight:400;color:#DEEBFF;line-height:1;white-space:nowrap;transform:scaleX(0.9558);transform-origin:0 0;-webkit-text-stroke:0.15px #DEEBFF;">Boards</div><div style="position:absolute;left:453.96px;top:12.20px;font-size:14px;font-weight:400;color:#DEEBFF;line-height:1;white-space:nowrap;transform:scaleX(0.9382);transform-origin:0 0;-webkit-text-stroke:0.15px #DEEBFF;">Plans</div><div style="position:absolute;left:520.80px;top:12.20px;font-size:14px;font-weight:400;color:#DEEBFF;line-height:1;white-space:nowrap;transform:scaleX(0.9143);transform-origin:0 0;-webkit-text-stroke:0.15px #DEEBFF;">Assets</div><div style="position:absolute;left:593.80px;top:12.20px;font-size:14px;font-weight:400;color:#DEEBFF;line-height:1;white-space:nowrap;transform:scaleX(0.9703);transform-origin:0 0;-webkit-text-stroke:0.15px #DEEBFF;">Templates</div><div style="position:absolute;left:701.00px;top:12.20px;font-size:14px;font-weight:400;color:#ffffff;line-height:1;white-space:nowrap;transform:scaleX(0.9762);transform-origin:0 0;-webkit-text-stroke:0.55px #ffffff;">Create</div><div style="position:absolute;left:1248.66px;top:13.00px;font-size:14px;font-weight:400;color:#A5ADBA;line-height:1;white-space:nowrap;transform:scaleX(0.9395);transform-origin:0 0;">Search</div><div style="position:absolute;left:19.64px;top:62.40px;font-size:29.5px;font-weight:400;color:#172B4D;line-height:1;white-space:nowrap;transform:scaleX(0.9797);transform-origin:0 0;-webkit-text-stroke:0.3px #172B4D;">Manage Templates</div><div style="position:absolute;left:20.30px;top:123.90px;font-size:14px;font-weight:400;color:#0052CC;line-height:1;white-space:nowrap;transform:scaleX(0.9953);transform-origin:0 0;-webkit-text-stroke:0.15px #0052CC;">Templates</div><div style="position:absolute;left:103.27px;top:123.90px;font-size:14px;font-weight:400;color:#42526E;line-height:1;white-space:nowrap;transform:scaleX(0.9304);transform-origin:0 0;-webkit-text-stroke:0.15px #42526E;">Scopes</div><div style="position:absolute;left:167.33px;top:123.90px;font-size:14px;font-weight:400;color:#42526E;line-height:1;white-space:nowrap;transform:scaleX(0.9671);transform-origin:0 0;-webkit-text-stroke:0.15px #42526E;">Hierarchies</div><div style="position:absolute;left:256.70px;top:123.90px;font-size:14px;font-weight:400;color:#42526E;line-height:1;white-space:nowrap;transform:scaleX(0.9509);transform-origin:0 0;-webkit-text-stroke:0.15px #42526E;">Variables</div><div style="position:absolute;left:332.00px;top:123.90px;font-size:14px;font-weight:400;color:#42526E;line-height:1;white-space:nowrap;transform:scaleX(0.8966);transform-origin:0 0;-webkit-text-stroke:0.15px #42526E;">Tags</div><div style="position:absolute;left:378.60px;top:123.90px;font-size:14px;font-weight:400;color:#42526E;line-height:1;white-space:nowrap;transform:scaleX(0.9406);transform-origin:0 0;-webkit-text-stroke:0.15px #42526E;">Checklists</div><div style="position:absolute;left:16.00px;top:168.20px;font-size:14px;font-weight:400;color:#172B4D;line-height:1;white-space:nowrap;transform:scaleX(0.9899);transform-origin:0 0;">Template is an easy way to prepopulate field values when creating or editing a single issue.</div><div style="position:absolute;left:578.83px;top:168.20px;font-size:14px;font-weight:400;color:#0052CC;line-height:1;white-space:nowrap;transform:scaleX(0.9743);transform-origin:0 0;">Learn more</div><div style="position:absolute;left:1382.00px;top:173.70px;font-size:14px;font-weight:700;color:#ffffff;line-height:1;white-space:nowrap;transform:scaleX(0.9444);transform-origin:0 0;">Create Template</div><div style="position:absolute;left:24.52px;top:226.10px;font-size:14px;font-weight:400;color:#7A869A;line-height:1;white-space:nowrap;transform:scaleX(0.9789);transform-origin:0 0;">Enter name</div><div style="position:absolute;left:305.72px;top:226.20px;font-size:14px;font-weight:400;color:#6B778C;line-height:1;white-space:nowrap;transform:scaleX(0.9820);transform-origin:0 0;">Select tag</div><div style="position:absolute;left:587.14px;top:226.20px;font-size:14px;font-weight:400;color:#6B778C;line-height:1;white-space:nowrap;transform:scaleX(0.9608);transform-origin:0 0;">Select scope</div><div style="position:absolute;left:868.90px;top:225.90px;font-size:14px;font-weight:400;color:#172B4D;line-height:1;white-space:nowrap;transform:scaleX(0.8920);transform-origin:0 0;">ALL</div><div style="position:absolute;left:1149.62px;top:226.20px;font-size:14px;font-weight:400;color:#6B778C;line-height:1;white-space:nowrap;transform:scaleX(0.9812);transform-origin:0 0;">Select owner</div><div style="position:absolute;left:1430.10px;top:210.30px;font-size:12px;font-weight:400;color:#6B778C;line-height:1;white-space:nowrap;transform:scaleX(0.9889);transform-origin:0 0;">Can apply</div><div style="position:absolute;left:1516.36px;top:225.80px;font-size:14px;font-weight:400;color:#42526E;line-height:1;white-space:nowrap;transform:scaleX(0.9361);transform-origin:0 0;-webkit-text-stroke:0.15px #42526E;">Reset</div><div style="position:absolute;left:101.40px;top:285.80px;font-size:12px;font-weight:400;color:#5E6C84;line-height:1;white-space:nowrap;transform:scaleX(0.9875);transform-origin:0 0;-webkit-text-stroke:0.45px #5E6C84;">Name</div><div style="position:absolute;left:349.10px;top:285.80px;font-size:12px;font-weight:400;color:#5E6C84;line-height:1;white-space:nowrap;transform:scaleX(0.9684);transform-origin:0 0;-webkit-text-stroke:0.45px #5E6C84;">Tag</div><div style="position:absolute;left:473.10px;top:285.80px;font-size:12px;font-weight:400;color:#5E6C84;line-height:1;white-space:nowrap;transform:scaleX(0.9529);transform-origin:0 0;-webkit-text-stroke:0.45px #5E6C84;">Scope</div><div style="position:absolute;left:598.00px;top:285.80px;font-size:12px;font-weight:400;color:#5E6C84;line-height:1;white-space:nowrap;transform:scaleX(0.9878);transform-origin:0 0;-webkit-text-stroke:0.45px #5E6C84;">Available</div><div style="position:absolute;left:598.00px;top:302.70px;font-size:12px;font-weight:400;color:#5E6C84;line-height:1;white-space:nowrap;transform:scaleX(1.1000);transform-origin:0 0;-webkit-text-stroke:0.45px #5E6C84;">for</div><div style="position:absolute;left:660.00px;top:285.80px;font-size:12px;font-weight:400;color:#5E6C84;line-height:1;white-space:nowrap;transform:scaleX(1.0000);transform-origin:0 0;-webkit-text-stroke:0.45px #5E6C84;">Owners</div><div style="position:absolute;left:830.60px;top:285.80px;font-size:12px;font-weight:400;color:#5E6C84;line-height:1;white-space:nowrap;transform:scaleX(0.9698);transform-origin:0 0;-webkit-text-stroke:0.45px #5E6C84;">Created</div><div style="position:absolute;left:939.40px;top:285.80px;font-size:12px;font-weight:400;color:#5E6C84;line-height:1;white-space:nowrap;transform:scaleX(0.9932);transform-origin:0 0;-webkit-text-stroke:0.45px #5E6C84;">Created by</div><div style="position:absolute;left:1125.60px;top:285.80px;font-size:12px;font-weight:400;color:#5E6C84;line-height:1;white-space:nowrap;transform:scaleX(1.0062);transform-origin:0 0;-webkit-text-stroke:0.45px #5E6C84;">Changed by</div><div style="position:absolute;left:1312.40px;top:285.80px;font-size:12px;font-weight:400;color:#5E6C84;line-height:1;white-space:nowrap;transform:scaleX(0.9714);transform-origin:0 0;-webkit-text-stroke:0.45px #5E6C84;">Changed</div><div style="position:absolute;left:1421.50px;top:285.80px;font-size:12px;font-weight:400;color:#5E6C84;line-height:1;white-space:nowrap;transform:scaleX(0.9098);transform-origin:0 0;-webkit-text-stroke:0.45px #5E6C84;">Usages</div><div style="position:absolute;left:112.51px;top:338.20px;font-size:14px;font-weight:400;color:#0052CC;line-height:1;white-space:nowrap;transform:scaleX(0.9881);transform-origin:0 0;-webkit-text-stroke:0.5px #0052CC;">For Bugs by John</div><div style="position:absolute;left:357.50px;top:342.80px;font-size:14px;font-weight:400;color:#172B4D;line-height:1;white-space:nowrap;transform:scaleX(0.9702);transform-origin:0 0;">3 owners</div><div style="position:absolute;left:473.80px;top:343.80px;font-size:14px;font-weight:400;color:#172B4D;line-height:1;white-space:nowrap;transform:scaleX(0.9835);transform-origin:0 0;">for John by John</div><div style="position:absolute;left:602.00px;top:346.50px;font-size:11px;font-weight:700;color:#42526E;line-height:1;white-space:nowrap;transform:scaleX(1.0519);transform-origin:0 0;">OW...</div><div style="position:absolute;left:722.00px;top:343.80px;font-size:14px;font-weight:400;color:#0052CC;line-height:1;white-space:nowrap;transform:scaleX(0.9771);transform-origin:0 0;-webkit-text-stroke:0.15px #0052CC;">John Snow</div><div style="position:absolute;left:830.48px;top:344.00px;font-size:14px;font-weight:400;color:#172B4D;line-height:1;white-space:nowrap;transform:scaleX(1.0230);transform-origin:0 0;">1/30/2024</div><div style="position:absolute;left:1001.40px;top:343.80px;font-size:14px;font-weight:400;color:#0052CC;line-height:1;white-space:nowrap;transform:scaleX(0.9800);transform-origin:0 0;-webkit-text-stroke:0.15px #0052CC;">John Snow</div><div style="position:absolute;left:1188.00px;top:343.80px;font-size:14px;font-weight:400;color:#0052CC;line-height:1;white-space:nowrap;transform:scaleX(0.9714);transform-origin:0 0;-webkit-text-stroke:0.15px #0052CC;">John Snow</div><div style="position:absolute;left:1312.00px;top:344.00px;font-size:14px;font-weight:400;color:#172B4D;line-height:1;white-space:nowrap;transform:scaleX(1.0161);transform-origin:0 0;">2/01/2024</div><div style="position:absolute;left:112.54px;top:394.20px;font-size:14px;font-weight:400;color:#0052CC;line-height:1;white-space:nowrap;transform:scaleX(0.9615);transform-origin:0 0;-webkit-text-stroke:0.5px #0052CC;">Before Release</div><div style="position:absolute;left:357.50px;top:398.80px;font-size:14px;font-weight:400;color:#172B4D;line-height:1;white-space:nowrap;transform:scaleX(0.8875);transform-origin:0 0;">GLOBAL</div><div style="position:absolute;left:473.80px;top:399.80px;font-size:14px;font-weight:400;color:#172B4D;line-height:1;white-space:nowrap;transform:scaleX(0.9835);transform-origin:0 0;">for John by John</div><div style="position:absolute;left:602.00px;top:402.50px;font-size:11px;font-weight:700;color:#42526E;line-height:1;white-space:nowrap;transform:scaleX(1.0519);transform-origin:0 0;">OW...</div><div style="position:absolute;left:720.98px;top:399.80px;font-size:14px;font-weight:400;color:#0052CC;line-height:1;white-space:nowrap;transform:scaleX(1.0246);transform-origin:0 0;-webkit-text-stroke:0.15px #0052CC;">Lillian As...</div><div style="position:absolute;left:830.48px;top:400.00px;font-size:14px;font-weight:400;color:#172B4D;line-height:1;white-space:nowrap;transform:scaleX(1.0230);transform-origin:0 0;">1/30/2024</div><div style="position:absolute;left:1001.40px;top:399.80px;font-size:14px;font-weight:400;color:#0052CC;line-height:1;white-space:nowrap;transform:scaleX(0.9800);transform-origin:0 0;-webkit-text-stroke:0.15px #0052CC;">John Snow</div><div style="position:absolute;left:1188.00px;top:399.80px;font-size:14px;font-weight:400;color:#0052CC;line-height:1;white-space:nowrap;transform:scaleX(0.9714);transform-origin:0 0;-webkit-text-stroke:0.15px #0052CC;">John Snow</div><div style="position:absolute;left:1312.00px;top:400.00px;font-size:14px;font-weight:400;color:#172B4D;line-height:1;white-space:nowrap;transform:scaleX(1.0161);transform-origin:0 0;">2/01/2024</div><div style="position:absolute;left:112.48px;top:450.20px;font-size:14px;font-weight:400;color:#0052CC;line-height:1;white-space:nowrap;transform:scaleX(1.0203);transform-origin:0 0;-webkit-text-stroke:0.5px #0052CC;">Default for Kanban+Task</div><div style="position:absolute;left:357.50px;top:454.80px;font-size:14px;font-weight:400;color:#172B4D;line-height:1;white-space:nowrap;transform:scaleX(0.8875);transform-origin:0 0;">GLOBAL</div><div style="position:absolute;left:473.80px;top:445.80px;font-size:14px;font-weight:400;color:#172B4D;line-height:1;white-space:nowrap;transform:scaleX(0.9626);transform-origin:0 0;">software users</div><div style="position:absolute;left:473.80px;top:465.80px;font-size:14px;font-weight:400;color:#172B4D;line-height:1;white-space:nowrap;transform:scaleX(1.0111);transform-origin:0 0;">group</div><div style="position:absolute;left:602.00px;top:458.50px;font-size:11px;font-weight:700;color:#42526E;line-height:1;white-space:nowrap;transform:scaleX(1.0519);transform-origin:0 0;">OW...</div><div style="position:absolute;left:722.00px;top:455.80px;font-size:14px;font-weight:400;color:#0052CC;line-height:1;white-space:nowrap;transform:scaleX(0.9771);transform-origin:0 0;-webkit-text-stroke:0.15px #0052CC;">John Snow</div><div style="position:absolute;left:830.48px;top:456.00px;font-size:14px;font-weight:400;color:#172B4D;line-height:1;white-space:nowrap;transform:scaleX(1.0230);transform-origin:0 0;">1/30/2024</div><div style="position:absolute;left:1001.40px;top:455.80px;font-size:14px;font-weight:400;color:#0052CC;line-height:1;white-space:nowrap;transform:scaleX(0.9800);transform-origin:0 0;-webkit-text-stroke:0.15px #0052CC;">John Snow</div><div style="position:absolute;left:1188.00px;top:455.80px;font-size:14px;font-weight:400;color:#0052CC;line-height:1;white-space:nowrap;transform:scaleX(0.9714);transform-origin:0 0;-webkit-text-stroke:0.15px #0052CC;">John Snow</div><div style="position:absolute;left:1312.00px;top:456.00px;font-size:14px;font-weight:400;color:#172B4D;line-height:1;white-space:nowrap;transform:scaleX(1.0161);transform-origin:0 0;">2/01/2024</div><div style="position:absolute;left:112.51px;top:503.90px;font-size:14px;font-weight:400;color:#0052CC;line-height:1;white-space:nowrap;transform:scaleX(0.9909);transform-origin:0 0;-webkit-text-stroke:0.5px #0052CC;">Neue</div><div style="position:absolute;left:111.10px;top:541.70px;font-size:11px;font-weight:400;color:#6B778C;line-height:1;white-space:nowrap;transform:scaleX(0.9542);transform-origin:0 0;">neue</div><div style="position:absolute;left:357.50px;top:516.80px;font-size:14px;font-weight:400;color:#172B4D;line-height:1;white-space:nowrap;transform:scaleX(0.8875);transform-origin:0 0;">GLOBAL</div><div style="position:absolute;left:473.80px;top:517.80px;font-size:14px;font-weight:400;color:#172B4D;line-height:1;white-space:nowrap;transform:scaleX(0.8786);transform-origin:0 0;">GLOBAL</div><div style="position:absolute;left:602.00px;top:520.50px;font-size:11px;font-weight:700;color:#42526E;line-height:1;white-space:nowrap;transform:scaleX(1.0519);transform-origin:0 0;">OW...</div><div style="position:absolute;left:722.00px;top:517.80px;font-size:14px;font-weight:400;color:#0052CC;line-height:1;white-space:nowrap;transform:scaleX(0.9771);transform-origin:0 0;-webkit-text-stroke:0.15px #0052CC;">John Snow</div><div style="position:absolute;left:830.48px;top:518.00px;font-size:14px;font-weight:400;color:#172B4D;line-height:1;white-space:nowrap;transform:scaleX(1.0230);transform-origin:0 0;">1/23/2024</div><div style="position:absolute;left:1001.40px;top:517.80px;font-size:14px;font-weight:400;color:#0052CC;line-height:1;white-space:nowrap;transform:scaleX(1.0474);transform-origin:0 0;-webkit-text-stroke:0.15px #0052CC;">admin</div><div style="position:absolute;left:1188.00px;top:517.80px;font-size:14px;font-weight:400;color:#0052CC;line-height:1;white-space:nowrap;transform:scaleX(1.0342);transform-origin:0 0;-webkit-text-stroke:0.15px #0052CC;">admin</div><div style="position:absolute;left:1312.00px;top:518.00px;font-size:14px;font-weight:400;color:#172B4D;line-height:1;white-space:nowrap;transform:scaleX(1.0161);transform-origin:0 0;">2/01/2024</div><div style="position:absolute;left:113.50px;top:574.20px;font-size:14px;font-weight:400;color:#0052CC;line-height:1;white-space:nowrap;transform:scaleX(1.0060);transform-origin:0 0;-webkit-text-stroke:0.5px #0052CC;">Service-Management</div><div style="position:absolute;left:356.53px;top:578.80px;font-size:14px;font-weight:400;color:#172B4D;line-height:1;white-space:nowrap;transform:scaleX(0.9667);transform-origin:0 0;">Felder</div><div style="position:absolute;left:473.80px;top:569.80px;font-size:14px;font-weight:400;color:#172B4D;line-height:1;white-space:nowrap;transform:scaleX(0.9500);transform-origin:0 0;">service desk</div><div style="position:absolute;left:473.80px;top:589.80px;font-size:14px;font-weight:400;color:#172B4D;line-height:1;white-space:nowrap;transform:scaleX(0.9613);transform-origin:0 0;">team</div><div style="position:absolute;left:602.00px;top:582.50px;font-size:11px;font-weight:700;color:#42526E;line-height:1;white-space:nowrap;transform:scaleX(1.0519);transform-origin:0 0;">OW...</div><div style="position:absolute;left:722.00px;top:579.80px;font-size:14px;font-weight:400;color:#0052CC;line-height:1;white-space:nowrap;transform:scaleX(1.0263);transform-origin:0 0;-webkit-text-stroke:0.15px #0052CC;">admin</div><div style="position:absolute;left:830.48px;top:580.00px;font-size:14px;font-weight:400;color:#172B4D;line-height:1;white-space:nowrap;transform:scaleX(1.0230);transform-origin:0 0;">1/23/2024</div><div style="position:absolute;left:1001.40px;top:579.80px;font-size:14px;font-weight:400;color:#0052CC;line-height:1;white-space:nowrap;transform:scaleX(1.0474);transform-origin:0 0;-webkit-text-stroke:0.15px #0052CC;">admin</div><div style="position:absolute;left:1188.00px;top:579.80px;font-size:14px;font-weight:400;color:#0052CC;line-height:1;white-space:nowrap;transform:scaleX(1.0342);transform-origin:0 0;-webkit-text-stroke:0.15px #0052CC;">admin</div><div style="position:absolute;left:1312.00px;top:580.00px;font-size:14px;font-weight:400;color:#172B4D;line-height:1;white-space:nowrap;transform:scaleX(1.0161);transform-origin:0 0;">2/01/2024</div>
</div></body></html>
